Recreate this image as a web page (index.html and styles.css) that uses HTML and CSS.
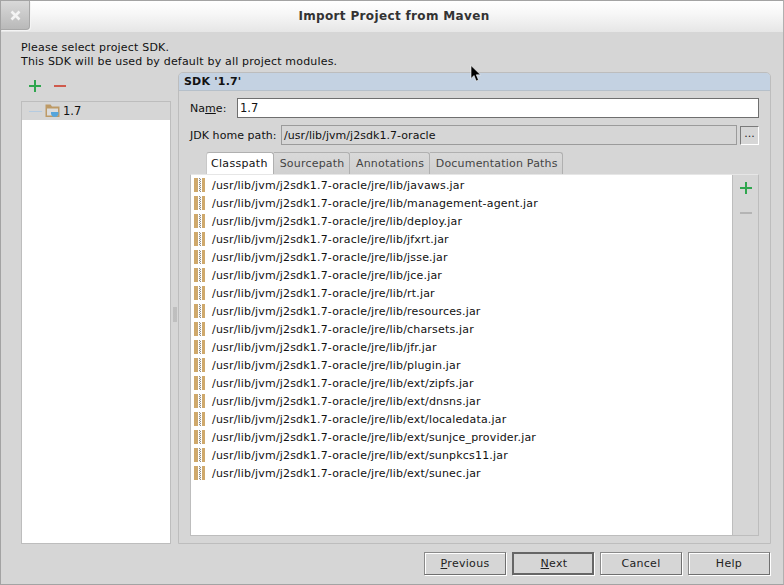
FILE: index.html
```html
<!DOCTYPE html>
<html lang="en">
<head>
  <meta charset="UTF-8" />
  <title>Import Project from Maven</title>
  <link rel="stylesheet" href="styles.css">
</head>
<body>
  <div class="window">
    <div class="titlebar">
      <div class="close">
        <svg width="11" height="11" viewBox="0 0 11 11"><path d="M1.500 1.500l8 8M9.500 1.500l-8 8" stroke="#f4f4f4" stroke-width="2.600" fill="none"/></svg>
      </div>
      <div class="title">Import Project from Maven</div>
    </div>

    <div class="content">
      <p class="intro">Please select project SDK.<br>This SDK will be used by default by all project modules.</p>

      <div class="main">
        <div class="left">
          <div class="tools">
            <svg width="14" height="14" viewBox="0 0 14 14"><path d="M7 1v12M1 7h12" stroke="#2fa64e" stroke-width="2" fill="none"/></svg>
            <svg width="14" height="14" viewBox="0 0 14 14"><path d="M1 7h12" stroke="#cf5a4c" stroke-width="2" fill="none"/></svg>
          </div>
          <div class="tree">
            <div class="tree-row">
              <span class="tree-line"></span>
              <svg width="15" height="14" viewBox="0 0 15 14">
                <path d="M0.500 0.500h5l1.500 2h7.500v10.500h-14z" fill="#bd9a66"/>
                <rect x="2" y="4.500" width="11" height="7" fill="#dcdcdc"/>
                <path d="M6 8h7.500v1.500q-0.500 3.500-3.700 3.500t-3.800-3.500z" fill="#55a5dc"/>
              </svg>
              <span>1.7</span>
            </div>
          </div>
        </div>

        <div class="splitter"><span class="grip"></span></div>

        <div class="panel">
          <div class="panel-head">SDK '1.7'</div>
          <div class="panel-body">
            <div class="field">
              <label class="name-label">Na<u>m</u>e:</label>
              <div class="input">1.7</div>
            </div>
            <div class="field jdk">
              <label>JDK home path:</label>
              <div class="input disabled">/usr/lib/jvm/j2sdk1.7-oracle</div>
              <button class="browse">...</button>
            </div>

            <div class="tabs">
              <div class="tab active">Classpath</div>
              <div class="tab">Sourcepath</div>
              <div class="tab">Annotations</div>
              <div class="tab">Documentation Paths</div>
            </div>

            <div class="listbox">
              <ul class="list">
                <li><i class="jar"></i>/usr/lib/jvm/j2sdk1.7-oracle/jre/lib/javaws.jar</li>
                <li><i class="jar"></i>/usr/lib/jvm/j2sdk1.7-oracle/jre/lib/management-agent.jar</li>
                <li><i class="jar"></i>/usr/lib/jvm/j2sdk1.7-oracle/jre/lib/deploy.jar</li>
                <li><i class="jar"></i>/usr/lib/jvm/j2sdk1.7-oracle/jre/lib/jfxrt.jar</li>
                <li><i class="jar"></i>/usr/lib/jvm/j2sdk1.7-oracle/jre/lib/jsse.jar</li>
                <li><i class="jar"></i>/usr/lib/jvm/j2sdk1.7-oracle/jre/lib/jce.jar</li>
                <li><i class="jar"></i>/usr/lib/jvm/j2sdk1.7-oracle/jre/lib/rt.jar</li>
                <li><i class="jar"></i>/usr/lib/jvm/j2sdk1.7-oracle/jre/lib/resources.jar</li>
                <li><i class="jar"></i>/usr/lib/jvm/j2sdk1.7-oracle/jre/lib/charsets.jar</li>
                <li><i class="jar"></i>/usr/lib/jvm/j2sdk1.7-oracle/jre/lib/jfr.jar</li>
                <li><i class="jar"></i>/usr/lib/jvm/j2sdk1.7-oracle/jre/lib/plugin.jar</li>
                <li><i class="jar"></i>/usr/lib/jvm/j2sdk1.7-oracle/jre/lib/ext/zipfs.jar</li>
                <li><i class="jar"></i>/usr/lib/jvm/j2sdk1.7-oracle/jre/lib/ext/dnsns.jar</li>
                <li><i class="jar"></i>/usr/lib/jvm/j2sdk1.7-oracle/jre/lib/ext/localedata.jar</li>
                <li><i class="jar"></i>/usr/lib/jvm/j2sdk1.7-oracle/jre/lib/ext/sunjce_provider.jar</li>
                <li><i class="jar"></i>/usr/lib/jvm/j2sdk1.7-oracle/jre/lib/ext/sunpkcs11.jar</li>
                <li><i class="jar"></i>/usr/lib/jvm/j2sdk1.7-oracle/jre/lib/ext/sunec.jar</li>
              </ul>
              <div class="side">
                <svg width="14" height="14" viewBox="0 0 14 14"><path d="M7 1v12M1 7h12" stroke="#2fa64e" stroke-width="2" fill="none"/></svg>
                <svg width="14" height="14" viewBox="0 0 14 14"><path d="M1 7h12" stroke="#b4b4b4" stroke-width="2" fill="none"/></svg>
              </div>
            </div>
          </div>
        </div>
      </div>

      <div class="buttons">
        <button class="btn"><u>P</u>revious</button>
        <button class="btn default"><u>N</u>ext</button>
        <button class="btn">Cancel</button>
        <button class="btn">Help</button>
      </div>
    </div>
  </div>

  <svg class="cursor" width="12" height="17" viewBox="0 0 12 17"><path d="M1 0.500v13l3-3 2.200 5.500 2.300-1-2.200-5.200h4.200z" fill="#000" stroke="#fff" stroke-width="0.600"/></svg>
</body>
</html>
```

FILE: styles.css
```css
* {
  box-sizing: border-box;
}

html, body {
  margin: 0;
  height: 100%;
}

body {
  font-family: "DejaVu Sans", sans-serif;
  font-size: 11px;
  color: #111;
  background: #d6d6d6;
  overflow: hidden;
}

.window {
  width: 784px;
  height: 585px;
  display: flex;
  flex-direction: column;
  border: 1px solid #a3a3a3;
  border-right-color: #b0b0b0;
}

.titlebar {
  height: 31px;
  flex: none;
  display: flex;
  background: linear-gradient(#ffffff, #f7f7f7 40%, #e6e6e6);
  position: relative;
}

.close {
  width: 29px;
  height: 29px;
  display: flex;
  align-items: center;
  justify-content: center;
  padding: 1px 0 0 1px;
  background: linear-gradient(#d9d9d9, #b9b9b9);
  border-right: 1px solid #a8a8a8;
  border-bottom: 1px solid #a8a8a8;
  border-bottom-right-radius: 4px;
  box-shadow: 1px 1px 0 #f4f4f4;
}

.title {
  position: absolute;
  left: 4px;
  right: 0;
  top: 8px;
  text-align: center;
  font-size: 12px;
  font-weight: bold;
  letter-spacing: 0.35px;
  color: #333;
}

.content {
  flex: 1;
  display: flex;
  flex-direction: column;
  padding: 9px 12px 9px 20px;
  min-height: 0;
}

.intro {
  margin: 0;
  line-height: 14px;
  letter-spacing: 0.19px;
}

.main {
  display: flex;
  margin-top: 3px;
  height: 472px;
}

.left {
  width: 150px;
  display: flex;
  flex-direction: column;
}

.tools {
  height: 29px;
  display: flex;
  align-items: center;
  gap: 11px;
  padding: 0 0 1px 7px;
}

.tree {
  flex: 1;
  background: #fff;
  border: 1px solid #bdbdbd;
}

.tree-row {
  height: 18px;
  display: flex;
  align-items: center;
  background: #d6d6d6;
  padding-left: 7px;
  gap: 3px;
  font-size: 11.500px;
}

.tree-line {
  width: 13px;
  border-top: 1px solid #b5cbe0;
}

.splitter {
  width: 7px;
  display: flex;
  align-items: center;
  justify-content: center;
}

.grip {
  width: 4px;
  height: 15px;
  margin-top: 12px;
  background-image: radial-gradient(circle, #bebebe 0.700px, transparent 1px);
  background-size: 2px 2px;
}

.panel {
  flex: 1;
  display: flex;
  flex-direction: column;
  border: 1px solid #bdbdbd;
  border-radius: 5px 5px 0 0;
}

.panel-head {
  height: 18px;
  padding: 2px 5px 0;
  background: #c4d2e2;
  border-bottom: 1px solid #b6c0ca;
  border-radius: 4px 4px 0 0;
  font-weight: bold;
  letter-spacing: 0.2px;
}

.panel-body {
  flex: 1;
  display: flex;
  flex-direction: column;
  padding: 7px 11px;
  min-height: 0;
}

.field {
  display: flex;
  align-items: center;
  height: 20px;
}

.field label {
  white-space: nowrap;
  letter-spacing: 0.05px;
}

.name-label {
  width: 47px;
}

.field.jdk {
  margin-top: 7px;
}

.field.jdk label {
  width: 91px;
}

.input {
  flex: 1;
  height: 20px;
  padding: 2px 2px;
  background: #fff;
  border: 1px solid #6f6f6f;
  font-size: 11.500px;
}

.input.disabled {
  padding-top: 3px;
  background: #d6d6d6;
  border-color: #9b9b9b;
  font-size: 11px;
  letter-spacing: 0.05px;
}

.browse {
  width: 19px;
  height: 19px;
  margin-left: 3px;
  padding: 0 0 4px;
  font: inherit;
  color: #222;
  background: #d6d6d6;
  border: 1px solid;
  border-color: #7a7a7a #ffffff #ffffff #7a7a7a;
}

.tabs {
  display: flex;
  margin-top: 7px;
  padding-left: 16px;
  height: 22px;
}

.tab {
  padding: 4px 4.500px 0 6px;
  background: linear-gradient(#d9d9d9, #d0d0d0);
  border: 1px solid #b0b0b0;
  border-left: 0;
  border-bottom: 0;
  border-radius: 0 3px 0 0;
  color: #444;
  letter-spacing: 0.2px;
}

.tab.active {
  background: #fff;
  border-left: 1px solid #c8c8c8;
  border-radius: 3px 3px 0 0;
  padding: 4px 5px 0 4px;
  letter-spacing: 0.3px;
  color: #111;
}

.listbox {
  flex: 1;
  display: flex;
  background: #fff;
  border: 1px solid #bdbdbd;
  border-top-color: #e6e6e6;
  min-height: 0;
}

.list {
  flex: 1;
  list-style: none;
  margin: 0;
  padding: 1px 0 0 3px;
}

.list li {
  height: 18px;
  display: flex;
  align-items: center;
  letter-spacing: 0.18px;
}

.jar {
  width: 11px;
  height: 14px;
  margin-right: 7px;
  background:
    repeating-linear-gradient(#8c8c8c 0 1px, #f0f0f0 1px 2px) 5px 0 / 1px 100% no-repeat,
    repeating-linear-gradient(#f0f0f0 0 1px, #8c8c8c 1px 2px) 6px 0 / 1px 100% no-repeat,
    linear-gradient(90deg, #cfa96c 4px, #fff 4px, #fff 8px, #cfa96c 8px);
}

.side {
  width: 26px;
  display: flex;
  flex-direction: column;
  align-items: center;
  gap: 11px;
  padding-top: 6px;
  background: #d6d6d6;
  border-left: 1px solid #bdbdbd;
}

.buttons {
  display: flex;
  justify-content: flex-end;
  gap: 6px;
  margin: 8px 1px 0 0;
}

.btn {
  width: 82px;
  height: 23px;
  padding: 0;
  font: inherit;
  letter-spacing: 0.3px;
  color: #222;
  background: #d6d6d6;
  border: 1px solid;
  border-color: #8a8a8a #6f6f6f #6f6f6f #8a8a8a;
  box-shadow: 1px 1px 0 #fff, inset 1px 1px 0 #fff;
}

.btn.default {
  padding-left: 2px;
  border-width: 2px;
  border-color: #666;
  box-shadow: 1px 1px 0 #fff;
}

.cursor {
  position: absolute;
  left: 470px;
  top: 65px;
}
```
